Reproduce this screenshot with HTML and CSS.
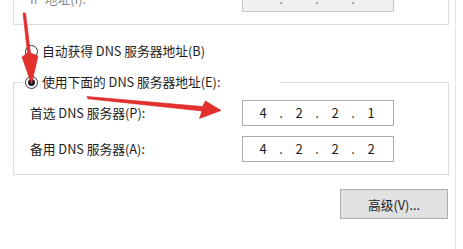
FILE: index.html
```html
<!DOCTYPE html>
<html lang="zh-CN">
<head>
<meta charset="utf-8">
<title>DNS 设置</title>
<link rel="stylesheet" href="styles.css">
</head>
<body>
<div class="page">
  <div class="top-group">
    <div class="field-row">
      <span class="label label-disabled">IP 地址(I):</span>
      <div class="ip-box ip-box-disabled">
        <span class="cell"></span><span class="cell dot">.</span><span class="cell"></span><span class="cell dot">.</span><span class="cell"></span><span class="cell dot">.</span><span class="cell"></span>
      </div>
    </div>
  </div>

  <div class="radio-row">
    <span class="radio"></span>
    <span class="radio-text">自动获得 DNS 服务器地址(B)</span>
  </div>

  <fieldset class="dns-group">
    <legend class="legend">
      <span class="legend-inner">
        <span class="radio radio-checked"></span>
        <span class="radio-text">使用下面的 DNS 服务器地址(E):</span>
      </span>
    </legend>
    <div class="fields">
      <span class="label">首选 DNS 服务器(P):</span>
      <div class="ip-box">
        <span class="cell">4</span><span class="cell dot">.</span><span class="cell">2</span><span class="cell dot">.</span><span class="cell">2</span><span class="cell dot">.</span><span class="cell">1</span>
      </div>
      <span class="label">备用 DNS 服务器(A):</span>
      <div class="ip-box">
        <span class="cell">4</span><span class="cell dot">.</span><span class="cell">2</span><span class="cell dot">.</span><span class="cell">2</span><span class="cell dot">.</span><span class="cell">2</span>
      </div>
    </div>
  </fieldset>

  <div class="actions">
    <button class="btn" type="button">高级(V)...</button>
  </div>

  <svg class="annotations" width="463" height="249" viewBox="0 0 463 249" aria-hidden="true">
    <polygon class="arrow" points="23,13 25.5,13 30.5,53 38,56 31.5,84 22,57 27.5,53"/>
    <polygon class="arrow" points="87,96.5 88,98.8 202,111 199.5,118.5 221,110.5 205.5,101 202.5,106.5"/>
  </svg>
</div>
</body>
</html>
```

FILE: styles.css
```css
html, body {
  margin: 0;
  padding: 0;
  background: #ffffff;
}

body {
  font-family: "Noto Sans CJK SC", "Noto Sans", sans-serif;
  font-size: 12.75px;
  color: #1e1e1e;
}

.page {
  position: relative;
  width: 455px;
  height: 249px;
  border-right: 1px solid #e6e6e6;
  overflow: hidden;
  background: #ffffff;
}

.top-group {
  margin-left: 13px;
  width: 436px;
  height: 25px;
  box-sizing: border-box;
  border: 1px solid #dcdcdc;
  border-top: none;
  padding: 0 0 12px 16px;
  display: flex;
  flex-direction: column;
  justify-content: flex-end;
  overflow: hidden;
}

.field-row,
.fields {
  display: grid;
  grid-template-columns: 212px 152px;
  align-items: center;
}

.field-row {
  flex-shrink: 0;
}

.fields {
  row-gap: 10px;
  padding: 10px 0 12px 16px;
}

.label {
  line-height: 16px;
  white-space: nowrap;
}

.label-disabled {
  color: #8a8a8a;
}

.ip-box {
  height: 26px;
  box-sizing: border-box;
  border: 1px solid #ababab;
  background: #ffffff;
  display: flex;
  align-items: center;
  padding-left: 11px;
  font-size: 13px;
  color: #222222;
}

.ip-box-disabled {
  background: #f0f0f0;
  border-color: #c6c6c6;
  color: #777777;
}

.cell {
  width: 18px;
  text-align: center;
  line-height: 16px;
}

.radio-row {
  display: flex;
  align-items: center;
  gap: 4px;
  height: 16px;
  margin: 18px 0 0 25px;
}

.radio {
  width: 13px;
  height: 13px;
  box-sizing: border-box;
  border: 1px solid #3a3a3a;
  border-radius: 50%;
  background: #ffffff;
  display: flex;
  align-items: center;
  justify-content: center;
  flex-shrink: 0;
}

.radio-checked {
  border-color: #2f3a48;
}

.radio-checked::after {
  content: "";
  width: 7px;
  height: 7px;
  border-radius: 50%;
  background: #1b1f27;
}

.radio-text {
  line-height: 16px;
  white-space: nowrap;
}

.dns-group {
  margin: 15px 0 0 13px;
  width: 436px;
  box-sizing: border-box;
  border: 1px solid #dcdcdc;
  padding: 0;
  min-inline-size: 0;
}

.legend {
  margin-left: 9px;
  padding: 0 0 0 2px;
  width: 257px;
  box-sizing: border-box;
  height: 16px;
}

.legend-inner {
  display: flex;
  align-items: center;
  gap: 4px;
  height: 16px;
}

.actions {
  display: flex;
  justify-content: flex-end;
  margin-top: 14px;
  padding-right: 7px;
}

.btn {
  width: 108px;
  height: 30px;
  box-sizing: border-box;
  border: 1px solid #adadad;
  background: #e1e1e1;
  font-family: "Noto Sans CJK SC", "Noto Sans", sans-serif;
  font-size: 12.75px;
  color: #1e1e1e;
  padding: 0;
  border-radius: 0;
}

.annotations {
  position: absolute;
  left: 0;
  top: 0;
  pointer-events: none;
}

.arrow {
  fill: #e3302c;
  stroke: #d42522;
  stroke-width: 0.6;
  stroke-linejoin: round;
}
```
